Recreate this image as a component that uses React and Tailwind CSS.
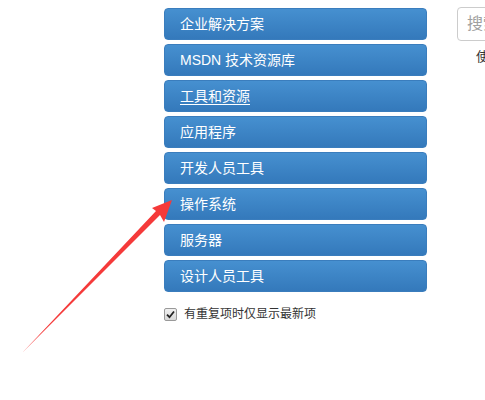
import React from "react";

const items = [
  "企业解决方案",
  "MSDN 技术资源库",
  "工具和资源",
  "应用程序",
  "开发人员工具",
  "操作系统",
  "服务器",
  "设计人员工具",
];

export default function App() {
  return (
    <div
      className="relative w-[485px] h-[400px] overflow-hidden bg-white"
      style={{ fontFamily: '"Liberation Sans", "Noto Sans CJK SC", sans-serif' }}
    >
      <div className="flex pt-[8px] pl-[164px]">
        <div className="w-[263px] shrink-0 flex flex-col">
          <div className="flex flex-col gap-[4px]">
            {items.map((t, i) => (
              <div
                key={t}
                className="h-[32px] rounded-[4px] border border-[#3a7dbd] bg-gradient-to-b from-[#4690d0] to-[#3479bb] text-white text-[14px] leading-[30px] pl-[15px]"
              >
                <span className={i === 2 ? "underline underline-offset-[3px]" : ""}>{t}</span>
              </div>
            ))}
          </div>
          <label className="flex items-center mt-[15px] text-[12px] text-[#333] leading-[14px]">
            <span className="w-[13px] h-[13px] rounded-[2px] border border-[#999] bg-gradient-to-b from-[#f0f0f0] to-[#d8d8d8] flex items-center justify-center">
              <svg width="9" height="9" viewBox="0 0 9 9">
                <path d="M1 4.6 L3.5 7.2 L8 1.5" stroke="#222" strokeWidth="1.8" fill="none" />
              </svg>
            </span>
            <span className="ml-[7px]">有重复项时仅显示最新项</span>
          </label>
        </div>
        <div className="ml-[30px] shrink-0 flex flex-col">
          <div className="w-[120px] h-[34px] -mt-[1px] rounded-[4px] border border-[#ccc] text-[16px] text-[#a0a0a0] leading-[32px] pl-[9px]">
            搜索
          </div>
          <div className="mt-[8px] pl-[19px] text-[13px] text-[#333] leading-[16px]">使用</div>
        </div>
      </div>
      <svg className="absolute left-0 top-0" width="485" height="400" viewBox="0 0 485 400">
        <polygon
          points="172,200 152,208 156,211 22,353 160,215 164,222"
          fill="#f53a3a"
        />
      </svg>
    </div>
  );
}
